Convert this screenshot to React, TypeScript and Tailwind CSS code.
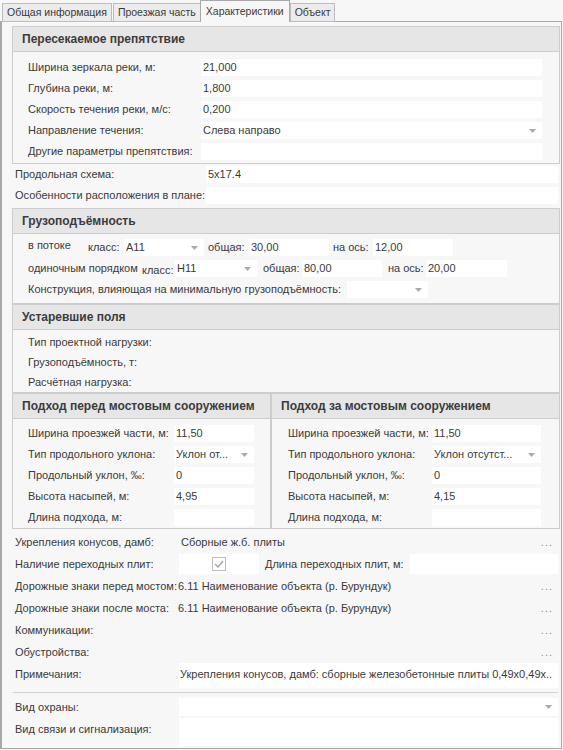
import React from "react";
import clsx from "clsx";

const Arrow = () => (
  <svg width="7" height="4" viewBox="0 0 7 4" className="shrink-0">
    <path d="M0 0h7L3.5 4z" fill="#a9a9a9" />
  </svg>
);

function Field({
  value,
  combo,
  className,
}: {
  value?: string;
  combo?: boolean;
  className?: string;
}) {
  return (
    <div
      className={clsx(
        "h-[17px] bg-white flex items-center justify-between pl-[2px] pr-[6px] overflow-hidden whitespace-nowrap",
        className
      )}
    >
      <span className="truncate">{value}</span>
      {combo && <Arrow />}
    </div>
  );
}

function Group({
  title,
  className,
  children,
}: {
  title: string;
  className?: string;
  children: React.ReactNode;
}) {
  return (
    <div className={clsx("border border-[#cdcdcd]", className)}>
      <div className="h-[25px] bg-[#e6e6e6] border-b border-[#cdcdcd] flex items-center pl-[9px] font-bold text-[12px] text-[#3c3c3c]">
        {title}
      </div>
      {children}
    </div>
  );
}

const Dots = () => <span className="ml-auto pr-[8px] text-[#8a8a8a] tracking-[1px]">...</span>;

const tabs = ["Общая информация", "Проезжая часть", "Характеристики", "Объект"];

export default function App() {
  return (
    <div className="w-[563px] h-[750px] overflow-hidden bg-[#f7f7f7] font-['Liberation_Sans',Arial,sans-serif] text-[11px] text-[#3a3a3a]">
      {/* tabs */}
      <div className="h-[22px] flex items-end pl-[2px] -mb-[1px] relative">
        {tabs.map((t, i) =>
          i === 2 ? (
            <div
              key={t}
              className="h-[22px] px-[5px] flex items-center bg-[#f7f7f7] border border-b-0 border-[#a9a9a9] text-[10.5px] relative z-10"
            >
              {t}
            </div>
          ) : (
            <div
              key={t}
              className={clsx(
                "h-[19px] px-[4px] flex items-center bg-[#ececec] border border-[#bdbdbd] text-[10.5px]",
                i === 1 && "ml-[1px] border-r-0"
              )}
            >
              {t}
            </div>
          )
        )}
      </div>

      {/* panel */}
      <div className="w-[562px] h-[728px] border-t border-r border-l-2 border-b border-b-dashed border-[#a9a9a9] pt-[4px]">
        <Group title="Пересекаемое препятствие" className="ml-[10px] w-[548px]">
          <div className="pt-[5px] pb-[1px]">
            {[
              ["Ширина зеркала реки, м:", "21,000"],
              ["Глубина реки, м:", "1,800"],
              ["Скорость течения реки, м/с:", "0,200"],
              ["Направление течения:", "Слева направо", "c"],
              ["Другие параметры препятствия:", ""],
            ].map(([l, v, c]) => (
              <div key={l} className="h-[21px] flex items-center pl-[15px]">
                <span className="w-[173px] whitespace-nowrap">{l}</span>
                <Field value={v} combo={!!c} className="w-[341px]" />
              </div>
            ))}
          </div>
        </Group>

        <div className="h-[21px] flex items-center pl-[13px]">
          <span className="w-[191px]">Продольная схема:</span>
          <Field value="5x17.4" className="w-[352px]" />
        </div>
        <div className="h-[21px] flex items-center pl-[13px]">
          <span className="w-[191px] whitespace-nowrap">Особенности расположения в плане:</span>
          <Field className="w-[352px]" />
        </div>

        <Group title="Грузоподъёмность" className="ml-[10px] w-[548px] mt-[2px]">
          <div className="pt-[3px] pb-[3px]">
            <div className="h-[21px] flex items-center pl-[15px]">
              <span className="w-[60px] -translate-y-[2px]">в потоке</span>
              <span className="w-[36px]">класс:</span>
              <Field value="А11" combo className="w-[80px]" />
              <span className="w-[45px] pl-[4px]">общая:</span>
              <Field value="30,00" className="w-[80px]" />
              <span className="w-[44px] pl-[4px]">на ось:</span>
              <Field value="12,00" className="w-[80px]" />
            </div>
            <div className="h-[21px] flex items-center pl-[15px]">
              <span className="w-[114px] whitespace-nowrap">одиночным порядком</span>
              <span className="w-[33px] translate-y-[2px]">класс:</span>
              <Field value="Н11" combo className="w-[82px]" />
              <span className="w-[45px] pl-[6px]">общая:</span>
              <Field value="80,00" className="w-[80px]" />
              <span className="w-[44px] pl-[6px]">на ось:</span>
              <Field value="20,00" className="w-[81px]" />
            </div>
            <div className="h-[21px] flex items-center pl-[15px]">
              <span className="w-[319px] whitespace-nowrap">
                Конструкция, влияющая на минимальную грузоподъёмность:
              </span>
              <Field combo className="w-[81px]" />
            </div>
          </div>
        </Group>

        <Group title="Устаревшие поля" className="ml-[10px] w-[548px]">
          <div className="pt-[2px]">
            {["Тип проектной нагрузки:", "Грузоподъёмность, т:", "Расчётная нагрузка:"].map((l) => (
              <div key={l} className="h-[20px] flex items-center pl-[15px]">
                {l}
              </div>
            ))}
          </div>
        </Group>

        <div className="ml-[10px] w-[548px] flex">
          <Group title="Подход перед мостовым сооружением" className="w-[259px]">
            <div className="pt-[4px]">
              {[
                ["Ширина проезжей части, м:", "11,50"],
                ["Тип продольного уклона:", "Уклон от...", "c"],
                ["Продольный уклон, ‰:", "0"],
                ["Высота насыпей, м:", "4,95"],
                ["Длина подхода, м:", ""],
              ].map(([l, v, c]) => (
                <div key={l} className="h-[21px] flex items-center pl-[15px]">
                  <span className="w-[146px] whitespace-nowrap">{l}</span>
                  <Field value={v} combo={!!c} className="w-[80px]" />
                </div>
              ))}
            </div>
          </Group>
          <Group title="Подход за мостовым сооружением" className="w-[289px]">
            <div className="pt-[4px]">
              {[
                ["Ширина проезжей части, м:", "11,50"],
                ["Тип продольного уклона:", "Уклон отсутст...", "c"],
                ["Продольный уклон, ‰:", "0"],
                ["Высота насыпей, м:", "4,15"],
                ["Длина подхода, м:", ""],
              ].map(([l, v, c]) => (
                <div key={l} className="h-[21px] flex items-center pl-[16px]">
                  <span className="w-[144px] whitespace-nowrap">{l}</span>
                  <Field value={v} combo={!!c} className="w-[109px]" />
                </div>
              ))}
            </div>
          </Group>
        </div>

        <div className="pt-[2px]">
          <div className="h-[22px] flex items-center pl-[13px]">
            <span className="w-[166px]">Укрепления конусов, дамб:</span>
            <span>Сборные ж.б. плиты</span>
            <Dots />
          </div>
          <div className="h-[22px] flex items-center pl-[13px]">
            <span className="w-[164px]">Наличие переходных плит:</span>
            <div className="w-[80px] h-[20px] bg-white flex items-center justify-center">
              <div className="w-[14px] h-[14px] border border-[#bdbdbd] bg-white flex items-center justify-center">
                <svg width="10" height="8" viewBox="0 0 10 8">
                  <path d="M1 4l3 3 5-6" stroke="#a0a0a0" strokeWidth="1.2" fill="none" />
                </svg>
              </div>
            </div>
            <span className="w-[151px] pl-[6px] whitespace-nowrap">Длина переходных плит, м:</span>
            <div className="w-[148px] h-[20px] bg-white" />
          </div>
          <div className="h-[22px] flex items-center pl-[13px]">
            <span className="w-[163px] whitespace-nowrap">Дорожные знаки перед мостом:</span>
            <span>6.11 Наименование объекта (р. Бурундук)</span>
            <Dots />
          </div>
          <div className="h-[22px] flex items-center pl-[13px]">
            <span className="w-[163px] whitespace-nowrap">Дорожные знаки после моста:</span>
            <span>6.11 Наименование объекта (р. Бурундук)</span>
            <Dots />
          </div>
          <div className="h-[22px] flex items-center pl-[13px]">
            <span>Коммуникации:</span>
            <Dots />
          </div>
          <div className="h-[22px] flex items-center pl-[13px]">
            <span>Обустройства:</span>
            <Dots />
          </div>
          <div className="flex pl-[13px]">
            <span className="w-[164px] pt-[3px]">Примечания:</span>
            <div className="w-[379px] h-[25px] bg-white pl-[1px] pt-[3px] overflow-hidden whitespace-nowrap">
              Укрепления конусов, дамб: сборные железобетонные плиты 0,49х0,49х..
            </div>
          </div>
          <div className="ml-[11px] mt-[4px] w-[545px] h-px bg-[#d2d2d2]" />
          <div className="mt-[3px] h-[22px] flex items-center pl-[13px]">
            <span className="w-[164px]">Вид охраны:</span>
            <Field combo className="w-[379px] h-[18px]" />
          </div>
          <div className="flex pl-[13px]">
            <span className="w-[164px] pt-[3px]">Вид связи и сигнализация:</span>
            <div className="w-[379px] h-[28px] bg-white" />
          </div>
        </div>
      </div>
    </div>
  );
}
